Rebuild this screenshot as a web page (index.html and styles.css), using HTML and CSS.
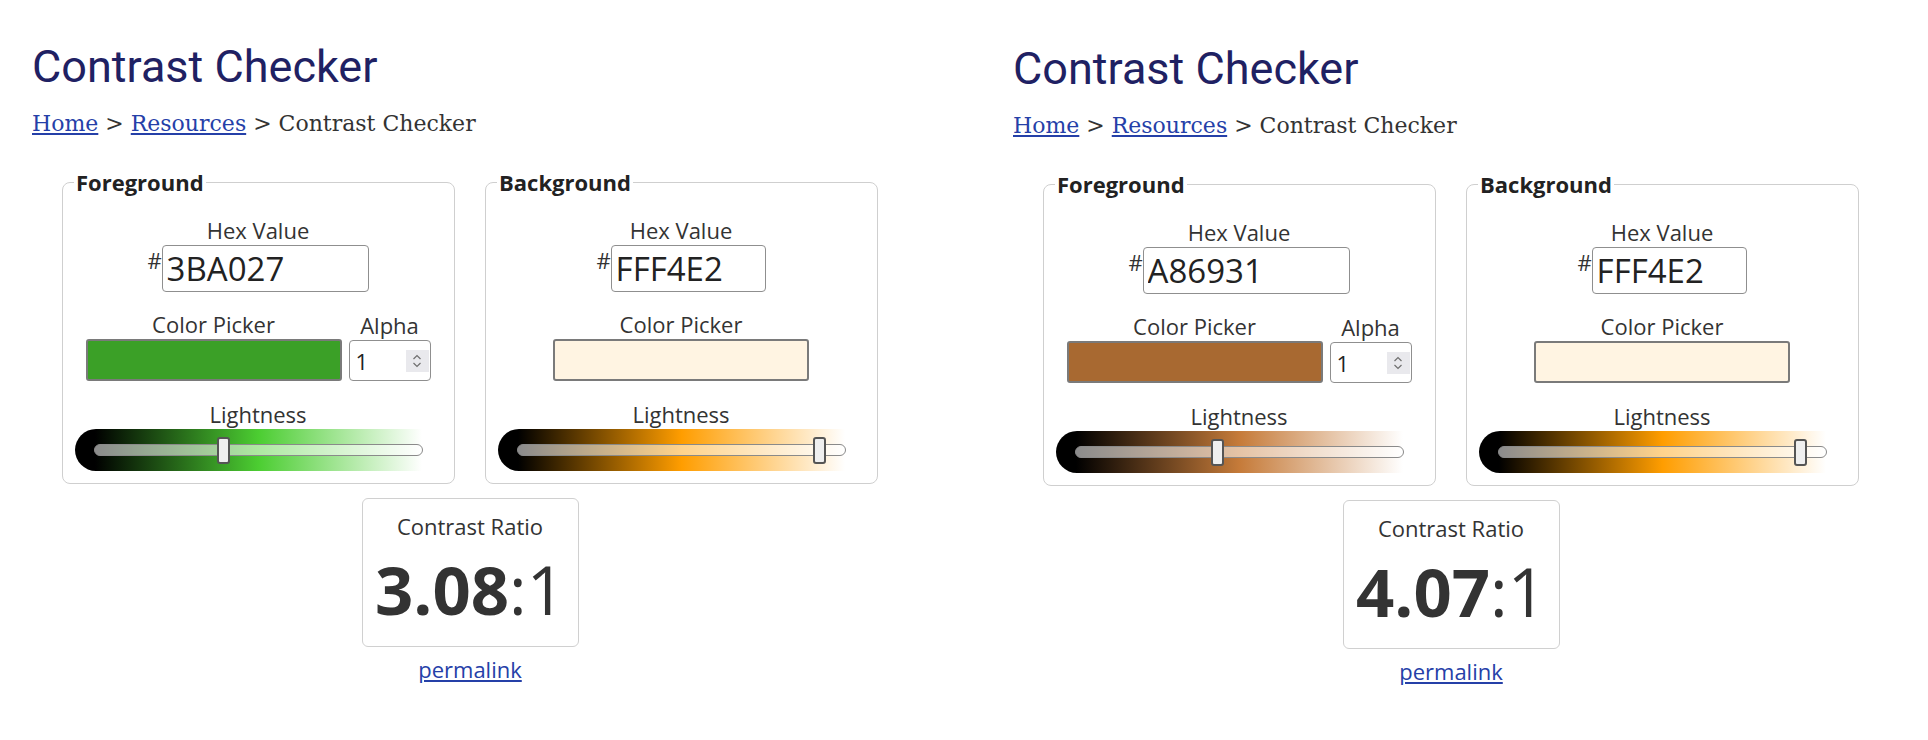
FILE: index.html
```html
<!DOCTYPE html>
<html lang="en">
<head>
<meta charset="utf-8">
<title>Contrast Checker</title>
<link rel="stylesheet" href="styles.css">
</head>
<body>
<div class="page">
  <section class="panel">
    <h1 class="title">Contrast Checker</h1>
    <nav class="crumbs"><a href="#">Home</a> &gt; <a href="#">Resources</a> &gt; Contrast Checker</nav>
    <div class="checker">
      <div class="sets">
        <fieldset class="set">
          <legend class="legend">Foreground</legend>
          <div class="set-body">
            <div class="group">
              <span class="lbl">Hex Value</span>
              <div class="hex-row"><span class="hash">#</span><input class="hex hex-wide" type="text" value="3BA027"></div>
            </div>
            <div class="picker-row">
              <div class="group">
                <span class="lbl">Color Picker</span>
                <div class="swatch" style="background:#3BA027"></div>
              </div>
              <div class="group">
                <span class="lbl">Alpha</span>
                <div class="alpha"><input class="alpha-in" type="text" value="1"><span class="spin"><svg width="10" height="16" viewBox="0 0 10 16"><path d="M1.5 6 L5 2.5 L8.5 6" fill="none" stroke="#6f6f6f" stroke-width="1.2"/><path d="M1.5 10 L5 13.5 L8.5 10" fill="none" stroke="#6f6f6f" stroke-width="1.2"/></svg></span></div>
              </div>
            </div>
            <div class="group group-light">
              <span class="lbl">Lightness</span>
              <div class="light" style="background:linear-gradient(to right, hsl(110 61% 0%) 20px, hsl(110 61% 50%) 50%, hsl(110 61% 100%) calc(100% - 20px))"><input class="range" type="range" min="0" max="100" value="39"></div>
            </div>
          </div>
        </fieldset>
        <fieldset class="set">
          <legend class="legend">Background</legend>
          <div class="set-body">
            <div class="group">
              <span class="lbl">Hex Value</span>
              <div class="hex-row"><span class="hash">#</span><input class="hex hex-narrow" type="text" value="FFF4E2"></div>
            </div>
            <div class="picker-row">
              <div class="group">
                <span class="lbl">Color Picker</span>
                <div class="swatch" style="background:#FFF4E2"></div>
              </div>
            </div>
            <div class="group group-light">
              <span class="lbl">Lightness</span>
              <div class="light" style="background:linear-gradient(to right, hsl(37 100% 0%) 20px, hsl(37 100% 50%) 50%, hsl(37 100% 100%) calc(100% - 20px))"><input class="range" type="range" min="0" max="100" value="94"></div>
            </div>
          </div>
        </fieldset>
      </div>
      <div class="result">
        <div class="result-lbl">Contrast Ratio</div>
        <div class="ratio"><b class="ratio-num">3.08</b>:1</div>
      </div>
      <a class="permalink" href="#">permalink</a>
    </div>
  </section>

  <section class="panel panel-right">
    <h1 class="title">Contrast Checker</h1>
    <nav class="crumbs"><a href="#">Home</a> &gt; <a href="#">Resources</a> &gt; Contrast Checker</nav>
    <div class="checker">
      <div class="sets">
        <fieldset class="set">
          <legend class="legend">Foreground</legend>
          <div class="set-body">
            <div class="group">
              <span class="lbl">Hex Value</span>
              <div class="hex-row"><span class="hash">#</span><input class="hex hex-wide" type="text" value="A86931"></div>
            </div>
            <div class="picker-row">
              <div class="group">
                <span class="lbl">Color Picker</span>
                <div class="swatch" style="background:#A86931"></div>
              </div>
              <div class="group">
                <span class="lbl">Alpha</span>
                <div class="alpha"><input class="alpha-in" type="text" value="1"><span class="spin"><svg width="10" height="16" viewBox="0 0 10 16"><path d="M1.5 6 L5 2.5 L8.5 6" fill="none" stroke="#6f6f6f" stroke-width="1.2"/><path d="M1.5 10 L5 13.5 L8.5 10" fill="none" stroke="#6f6f6f" stroke-width="1.2"/></svg></span></div>
              </div>
            </div>
            <div class="group group-light">
              <span class="lbl">Lightness</span>
              <div class="light" style="background:linear-gradient(to right, hsl(28 55% 0%) 20px, hsl(28 55% 50%) 50%, hsl(28 55% 100%) calc(100% - 20px))"><input class="range" type="range" min="0" max="100" value="43"></div>
            </div>
          </div>
        </fieldset>
        <fieldset class="set">
          <legend class="legend">Background</legend>
          <div class="set-body">
            <div class="group">
              <span class="lbl">Hex Value</span>
              <div class="hex-row"><span class="hash">#</span><input class="hex hex-narrow" type="text" value="FFF4E2"></div>
            </div>
            <div class="picker-row">
              <div class="group">
                <span class="lbl">Color Picker</span>
                <div class="swatch" style="background:#FFF4E2"></div>
              </div>
            </div>
            <div class="group group-light">
              <span class="lbl">Lightness</span>
              <div class="light" style="background:linear-gradient(to right, hsl(37 100% 0%) 20px, hsl(37 100% 50%) 50%, hsl(37 100% 100%) calc(100% - 20px))"><input class="range" type="range" min="0" max="100" value="94"></div>
            </div>
          </div>
        </fieldset>
      </div>
      <div class="result">
        <div class="result-lbl">Contrast Ratio</div>
        <div class="ratio"><b class="ratio-num">4.07</b>:1</div>
      </div>
      <a class="permalink" href="#">permalink</a>
    </div>
  </section>
</div>
</body>
</html>
```

FILE: styles.css
```css
* { box-sizing: border-box; }

html, body { margin: 0; padding: 0; background: #fff; }

body {
  font-family: "Open Sans", "Noto Sans", sans-serif;
  color: #333;
}

.page {
  display: flex;
  width: 1928px;
  height: 740px;
  overflow: hidden;
}

.panel {
  flex: 0 0 981px;
  padding: 40px 0 0 32px;
}

.panel-right {
  flex: 1 1 auto;
  padding-top: 42px;
}

.title {
  margin: 0;
  font: 400 45px/53px Roboto, "Noto Sans", sans-serif;
  color: #1f2163;
}

.crumbs {
  margin-top: 18px;
  font: 400 22px/26px "DejaVu Serif", serif;
  color: #333;
}

.crumbs a { color: #2540a8; }

.checker {
  margin: 30px 0 0 30px;
  width: 816px;
  display: flex;
  flex-direction: column;
  align-items: center;
}

.sets {
  align-self: stretch;
  display: flex;
  gap: 30px;
}

.set {
  width: 394px;
  margin: 0;
  padding: 18px 12px 12px 11px;
  border: 1px solid #cfcfcf;
  border-radius: 8px;
  min-inline-size: 0;
}

.legend {
  padding: 0 2px;
  font: 700 22px/30px "Open Sans", sans-serif;
  color: #222;
}

.set-body {
  display: flex;
  flex-direction: column;
  align-items: center;
  gap: 17px;
}

.group {
  display: flex;
  flex-direction: column;
  align-items: center;
}

.group-light { margin-top: 1px; }

.lbl {
  font-size: 22px;
  line-height: 30px;
  color: #333;
}

.hex-row {
  display: flex;
  align-items: flex-start;
}

.hash {
  font-size: 22px;
  line-height: 30px;
  color: #333;
}

.hex {
  height: 47px;
  margin: 0;
  padding: 0 4px;
  border: 1px solid #8f8f8f;
  border-radius: 4px;
  font: 400 33px/45px "Open Sans", sans-serif;
  color: #222;
  background: #fff;
}

.hex-wide { width: 207px; }
.hex-narrow { width: 155px; }

.picker-row {
  display: flex;
  align-items: flex-end;
  gap: 7px;
}

.swatch {
  width: 256px;
  height: 42px;
  border: 2px solid #7a7a7a;
  border-radius: 3px;
}

.alpha {
  width: 82px;
  height: 41px;
  border: 1px solid #8f8f8f;
  border-radius: 4px;
  display: flex;
  align-items: center;
  padding: 0 0 0 6px;
  background: #fff;
}

.alpha-in {
  flex: 1 1 auto;
  width: 40px;
  border: 0;
  padding: 0;
  margin: 0;
  font: 400 22px/30px "Open Sans", sans-serif;
  color: #222;
  background: transparent;
}

.spin {
  flex: none;
  width: 23px;
  height: 22px;
  margin-right: 1px;
  background: #e9e9ed;
  display: flex;
  align-items: center;
  justify-content: center;
}

.light {
  width: 367px;
  height: 42px;
  border-radius: 21px;
  display: flex;
  align-items: center;
  justify-content: center;
}

.range {
  -webkit-appearance: none;
  appearance: none;
  width: 329px;
  height: 27px;
  margin: 0;
  background: transparent;
}

.range::-webkit-slider-runnable-track {
  height: 12px;
  border: 1px solid #8a8a8a;
  border-radius: 6px;
  background: rgba(255, 255, 255, 0.55);
}

.range::-webkit-slider-thumb {
  -webkit-appearance: none;
  appearance: none;
  width: 13px;
  height: 27px;
  margin-top: -8.5px;
  border: 2px solid #555;
  border-radius: 3px;
  background: #efefef;
}

.result {
  margin-top: 14px;
  width: 217px;
  padding: 12px 0 21px;
  border: 1px solid #d0d0d0;
  border-radius: 6px;
  text-align: center;
}

.result-lbl {
  font-size: 22px;
  line-height: 30px;
  color: #333;
}

.ratio {
  margin-top: 12px;
  font: 400 67px/72px "Open Sans", sans-serif;
  color: #333;
  white-space: nowrap;
}

.ratio-num { font-weight: 700; }

.permalink {
  margin-top: 7px;
  font-size: 22px;
  line-height: 30px;
  color: #2540a8;
}
```
